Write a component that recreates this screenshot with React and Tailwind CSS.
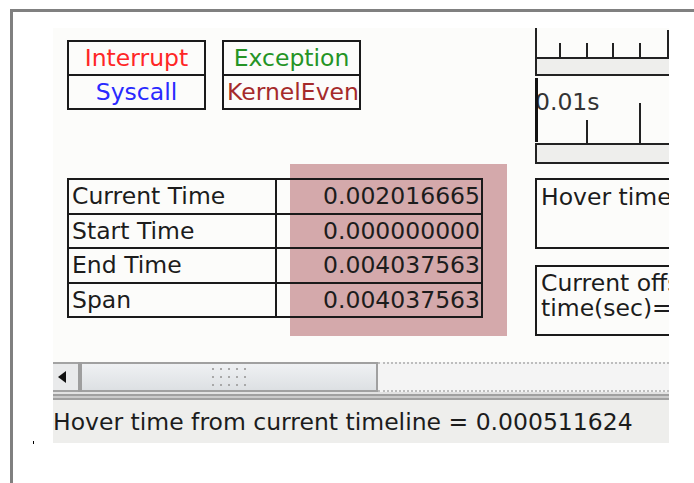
function LegendBox({ top, topClass, bottom, bottomClass, bottomAlign = 'justify-center' }) {
  return (
    <div className="flex h-[70px] w-[139px] flex-col border-2 border-[#1a1a1a]">
      <div className={`flex h-[34px] items-center justify-center whitespace-nowrap border-b-2 border-[#1a1a1a] ${topClass}`}>
        {top}
      </div>
      <div className={`flex flex-1 items-center overflow-hidden whitespace-nowrap ${bottomAlign} ${bottomClass}`}>
        {bottom}
      </div>
    </div>
  );
}

const rows = [
  ['Current Time', '0.002016665'],
  ['Start Time', '0.000000000'],
  ['End Time', '0.004037563'],
  ['Span', '0.004037563'],
];

function TimeTable() {
  return (
    <div className="relative mt-[54px] pt-[14px]">
      <div className="absolute left-[223px] top-0 h-[172px] w-[217px] bg-[#d4a9ab]" />
      <div className="relative w-[416px] border-2 border-[#1a1a1a]">
        {rows.map(([label, value], i) => (
          <div
            key={label}
            className={`flex ${i > 0 ? 'h-[34.5px] border-t-2 border-[#1a1a1a]' : 'h-[32.5px]'}`}
          >
            <div className="flex w-[208px] items-center border-r-2 border-[#1a1a1a] pl-[3px]">{label}</div>
            <div className="flex flex-1 items-center justify-end pr-[1px]">{value}</div>
          </div>
        ))}
      </div>
    </div>
  );
}

function Rulers() {
  const ink = '#222';
  return (
    <svg width="134" height="136" viewBox="0 0 134 136" className="block">
      {/* upper ruler */}
      <rect x="2" y="31" width="132" height="15" fill="#eeeeec" />
      <rect x="0" y="0" width="2" height="48" fill={ink} />
      <rect x="132" y="2" width="2" height="29" fill={ink} />
      {[24, 51, 77, 104].map((x) => (
        <rect key={x} x={x} y="15" width="2" height="15" fill={ink} />
      ))}
      <rect x="0" y="29" width="134" height="2" fill={ink} />
      <rect x="0" y="46" width="134" height="2" fill={ink} />
      {/* lower ruler */}
      <rect x="2" y="117" width="132" height="17" fill="#eeeeec" />
      <text x="0" y="82" fontSize="23.5" fill="#333" fontFamily="DejaVu Sans, sans-serif">
        0.01s
      </text>
      <rect x="0" y="50" width="3" height="64" fill="#111" />
      <rect x="51" y="92" width="2" height="23" fill={ink} />
      <rect x="104" y="75" width="2" height="40" fill={ink} />
      <rect x="0" y="115" width="134" height="2" fill={ink} />
      <rect x="0" y="115" width="2" height="21" fill={ink} />
      <rect x="0" y="134" width="134" height="2" fill={ink} />
    </svg>
  );
}

function Scrollbar() {
  return (
    <div className="flex h-[38px] flex-col">
      <div className="flex h-[30px]">
        <div className="flex w-[25px] items-center border-y-2 border-[#a3a3a3] bg-[#e9eaeb] pl-[5px]">
          <svg width="8" height="12" viewBox="0 0 8 12">
            <polygon points="8,0 8,12 0,6" fill="#111" />
          </svg>
        </div>
        <div className="w-[4px] bg-[#9e9e9e]" />
        <div className="flex w-[296px] items-center justify-center border-y-2 border-r-2 border-[#a0a0a0] bg-gradient-to-b from-[#eff1f3] to-[#dde0e3]">
          <div className="grid grid-cols-5 gap-[6px]">
            {Array.from({ length: 15 }).map((_, i) => (
              <span key={i} className="h-[2px] w-[2px] bg-[#a8a8a8]" />
            ))}
          </div>
        </div>
        <div className="flex-1 border-y-2 border-dotted border-[#bdbdbd] bg-[#f4f4f4]" />
      </div>
      <div className="h-[2px] bg-[#e2e2e2]" />
      <div className="h-[2px] bg-[#a0a0a0]" />
      <div className="h-[2px] bg-[#cacaca]" />
      <div className="h-[2px] bg-[#a0a0a0]" />
    </div>
  );
}

export default function App() {
  return (
    <div className="h-[483px] w-[694px] overflow-hidden bg-white pl-[10px] pt-[9px] font-['DejaVu_Sans',sans-serif] text-[23.5px] leading-[26px] text-[#1c1c1c]">
      <div className="relative h-[474px] border-l-[3px] border-t-[3px] border-[#808080] pl-[40px] pt-[16px]">
        <span className="absolute left-[20px] top-[429px] h-[3px] w-px bg-black" />
        <div className="w-[616px] bg-[#fcfcfa]">
          <div className="flex h-[334px]">
            <div className="w-[482px] pl-[14px] pt-[12px]">
              <div className="flex gap-[16px]">
                <LegendBox top="Interrupt" topClass="text-[#ff2626]" bottom="Syscall" bottomClass="text-[#2a2aff]" />
                <LegendBox
                  top="Exception"
                  topClass="text-[#259425]"
                  bottom="KernelEven"
                  bottomClass="text-[#a52a2a] pl-[3px]"
                  bottomAlign="justify-start"
                />
              </div>
              <TimeTable />
            </div>
            <div className="w-[134px] overflow-hidden">
              <Rulers />
              <div className="mt-[14px] h-[71px] w-[220px] whitespace-nowrap border-2 border-[#1a1a1a] pl-[4px] pt-[4px]">
                Hover time
              </div>
              <div className="mt-[16px] h-[71px] w-[220px] whitespace-nowrap border-2 border-[#1a1a1a] pl-[4px] pt-[4px] leading-[25px]">
                <div>Current offset</div>
                <div>time(sec)=</div>
              </div>
            </div>
          </div>
          <Scrollbar />
          <div className="h-[43px] whitespace-nowrap bg-[#eeeeec] pt-[9px]">
            Hover time from current timeline = 0.000511624
          </div>
        </div>
      </div>
    </div>
  );
}
